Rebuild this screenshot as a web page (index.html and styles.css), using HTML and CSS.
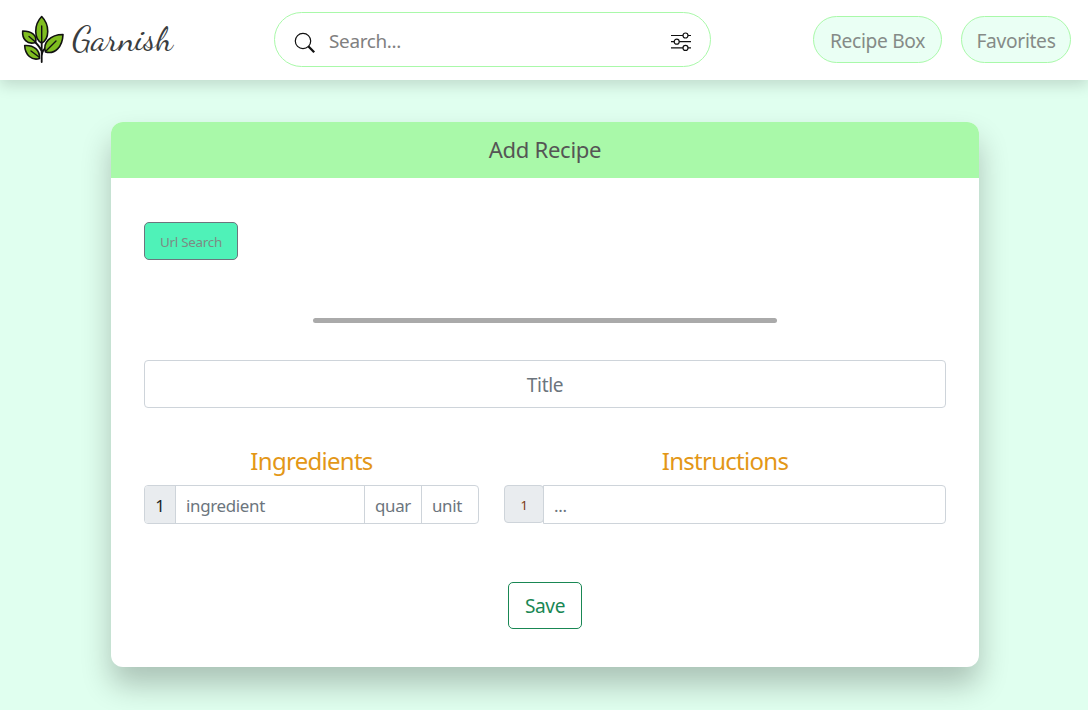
FILE: index.html
```html
<!DOCTYPE html>
<html lang="en">
<head>
<meta charset="utf-8">
<title>Garnish</title>
<link rel="stylesheet" href="styles.css">
</head>
<body>
<header class="navbar">
  <a class="brand">
    <svg class="brand-leaf" viewBox="0 0 44 50" fill="#7fbd20" stroke="#111" stroke-width="1.600" stroke-linecap="round" stroke-linejoin="round">
      <path d="M20.700 48V29M20.700 42C21 37 23 35 27 32M20.500 37C19 33 17 31 14 28" fill="none" stroke-width="1.800"/>
      <path d="M20.700 29C13 25 12.500 11 20.700 2.500C29 11 28.500 25 20.700 29Z"/>
      <path d="M24.500 38C21.500 29 29 20.500 42 20.500C41.500 33 34 40.500 24.500 38Z"/>
      <path d="M14.500 28.500C6 31 1 25 1.700 17C10 17 16.500 21 14.500 28.500Z"/>
      <path d="M18.500 44.500C11 47 4 41 3.700 31.500C13 31 19 36 18.500 44.500Z"/>
      <path d="M20.700 28V12M25 37L35 27M14.500 28L8 22.500M18 43L10 37" fill="none" stroke-width="1.400"/>
    </svg>
    <span class="brand-name">Garnish</span>
  </a>
  <div class="search">
    <svg class="search-icon" viewBox="0 0 22 22" fill="none" stroke="#111">
      <circle cx="9" cy="9" r="7.700" stroke-width="1.200"/>
      <path d="M14.300 14.300L20.200 20.200" stroke-width="2.300"/>
    </svg>
    <span class="search-text">Search...</span>
    <svg class="filter-icon" viewBox="0 0 20 20" fill="#fff" stroke="#111" stroke-width="1.200">
      <path d="M0 3.500H20M0 9.700H20M0 15.900H20"/>
      <circle cx="14.500" cy="3.500" r="2.500"/>
      <circle cx="5.700" cy="9.700" r="2.500"/>
      <circle cx="14.500" cy="15.900" r="2.500"/>
    </svg>
  </div>
  <nav class="links">
    <a class="pill pill-box"><span>Recipe Box</span></a>
    <a class="pill pill-fav"><span>Favorites</span></a>
  </nav>
</header>
<main class="card">
  <h1 class="card-header">Add Recipe</h1>
  <div class="card-body">
    <button class="url-button">Url Search</button>
    <hr class="divider">
    <div class="title-field">Title</div>
    <div class="columns">
      <section class="ingredients">
        <h2 class="heading">Ingredients</h2>
        <div class="group">
          <span class="number">1</span>
          <span class="cell">ingredient</span>
          <span class="cell">quar</span>
          <span class="cell">unit</span>
        </div>
      </section>
      <section class="instructions">
        <h2 class="heading">Instructions</h2>
        <div class="steps">
          <span class="step-number">1</span>
          <span class="step-field">...</span>
        </div>
      </section>
    </div>
    <button class="save-button">Save</button>
  </div>
</main>
</body>
</html>
```
FILE: styles.css
```css
* { box-sizing: border-box; }
body {
  margin: 0;
  height: 710px;
  overflow: hidden;
  background: #e0ffef;
  font-family: "Noto Sans", "Open Sans", sans-serif;
  letter-spacing: -.02em;
  color: #212529;
}
.navbar {
  display: flex;
  align-items: flex-start;
  height: 80px;
  background: #fff;
  box-shadow: 0 5px 14px rgba(0, 0, 0, .15);
}
.brand { display: flex; width: 274px; padding: 14px 0 0 21px; }
.brand-leaf { width: 44px; height: 50px; flex: none; }
.brand-name {
  margin-left: 7px;
  font: 35px/50px "Dancing Script", cursive;
  letter-spacing: .1px;
  color: #3a3d40;
}
.search {
  display: flex;
  align-items: center;
  width: 437px;
  height: 55px;
  margin-top: 12px;
  padding: 0 19px;
  border: 1px solid #a9f9a9;
  border-radius: 28px;
}
.search-icon { width: 22px; height: 22px; margin-top: 6px; }
.search-text { flex: 1; margin: 2px 0 0 13px; font-size: 18.9px; line-height: 28px; color: #808080; }
.filter-icon { width: 20px; height: 20px; margin-top: 4px; }
.links { display: flex; gap: 19px; margin: 16px 0 0 102px; }
.pill {
  display: flex;
  align-items: center;
  justify-content: center;
  height: 47px;
  border: 1px solid #a9f9a9;
  border-radius: 24px;
  background: #eafff4;
  color: #858b87;
  font-size: 19.2px;
  padding-top: 2px;
  white-space: nowrap;
}
.pill-box { width: 129px; }
.pill-fav { width: 110px; }
.card {
  width: 868px;
  height: 545px;
  margin: 42px 0 0 111px;
  border-radius: 12px;
  background: #fff;
  box-shadow: 0 18px 30px rgba(0, 0, 0, .24);
}
.card-header {
  margin: 0;
  height: 56px;
  border-radius: 12px 12px 0 0;
  background: #a9f9a9;
  color: #555;
  font-size: 22.1px;
  font-weight: 400;
  line-height: 54px;
  text-align: center;
}
.card-body { display: flex; flex-direction: column; padding: 44px 33px 0; }
button { padding: 0; font-family: inherit; letter-spacing: -.02em; }
.url-button {
  width: 94px;
  height: 38px;
  padding-top: 2px;
  border: 1px solid #6c757d;
  border-radius: 5px;
  background: #4ff2b8;
  color: #7d8a84;
  font-size: 13.4px;
}
.divider { width: 464px; height: 5px; margin: 58px auto 37px; border: 0; border-radius: 3px; background: #aaa; }
.title-field {
  height: 48px;
  border: 1px solid #ced4da;
  border-radius: 4px;
  color: #6c757d;
  font-size: 19.1px;
  line-height: 48px;
  text-align: center;
}
.columns { display: grid; grid-template-columns: 335px 442px; gap: 25px; margin-top: 34px; }
.heading { margin: 0; height: 43px; color: #e39717; font-size: 24px; font-weight: 400; letter-spacing: -.03em; line-height: 38px; text-align: center; }
.group {
  display: grid;
  grid-template-columns: 30px 189px 57px 1fr;
  height: 39px;
  border: 1px solid #ced4da;
  border-radius: 4px;
  overflow: hidden;
  font-size: 16.9px;
  line-height: 39px;
}
.number { background: #e9ecef; text-align: center; }
.cell { padding-left: 10px; border-left: 1px solid #ced4da; color: #6c757d; overflow: hidden; }
.steps { display: flex; font-size: 16.9px; line-height: 39px; }
.step-number {
  width: 40px;
  height: 38px;
  border: 1px solid #ced4da;
  border-radius: 4px;
  background: #e9ecef;
  color: #7a3a10;
  font-size: 13px;
  text-align: center;
}
.step-field {
  flex: 1;
  height: 39px;
  margin-left: -1px;
  padding-left: 10px;
  border: 1px solid #ced4da;
  border-radius: 0 4px 4px 0;
  background: #fff;
  color: #6c757d;
}
.save-button {
  align-self: center;
  width: 74px;
  height: 47px;
  margin-top: 58px;
  border: 1px solid #198754;
  border-radius: 5px;
  background: #fff;
  color: #198754;
  font-size: 19.1px;
}
```
